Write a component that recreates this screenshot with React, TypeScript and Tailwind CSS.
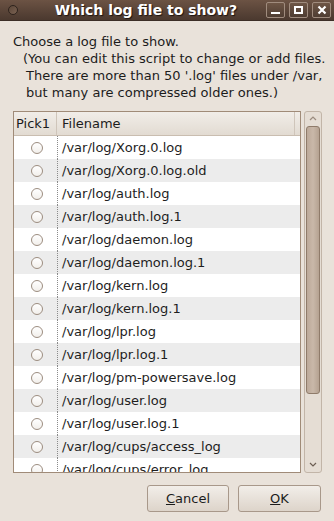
import React from "react";

const files = [
  "/var/log/Xorg.0.log",
  "/var/log/Xorg.0.log.old",
  "/var/log/auth.log",
  "/var/log/auth.log.1",
  "/var/log/daemon.log",
  "/var/log/daemon.log.1",
  "/var/log/kern.log",
  "/var/log/kern.log.1",
  "/var/log/lpr.log",
  "/var/log/lpr.log.1",
  "/var/log/pm-powersave.log",
  "/var/log/user.log",
  "/var/log/user.log.1",
  "/var/log/cups/access_log",
  "/var/log/cups/error_log",
];

const TitleButton = ({ children }: { children: React.ReactNode }) => (
  <div className="w-[19px] h-[16px] rounded-[2px] border border-[#a08c7e] bg-gradient-to-b from-[#6e5646] to-[#4f3d32] flex items-center justify-center">
    {children}
  </div>
);

export default function App() {
  return (
    <div
      className="w-[334px] h-[521px] bg-[#e9e2da] flex flex-col overflow-hidden text-[#1c1c1c]"
      style={{ fontFamily: '"DejaVu Sans", sans-serif' }}
    >
      {/* Title bar */}
      <div className="h-[21px] bg-gradient-to-b from-[#6c5344] to-[#4b392f] flex items-center px-[8px] border-b border-[#3c2e26]">
        <div className="w-[10px] h-[10px] rounded-full border border-[#2e231d] bg-gradient-to-br from-[#5b4638] to-[#7a6252]" />
        <div
          className="flex-1 text-center text-white font-bold text-[14px] leading-none pl-[8px]"
          style={{ textShadow: "1px 1px 1px #1e1410" }}
        >
          Which log file to show?
        </div>
        <div className="flex gap-[4px] -mr-[5px]">
          <TitleButton>
            <div className="w-[9px] h-[2px] bg-white mt-[6px]" />
          </TitleButton>
          <TitleButton>
            <div className="w-[9px] h-[8px] border-2 border-white" />
          </TitleButton>
          <TitleButton>
            <svg width="10" height="10" viewBox="0 0 10 10">
              <path d="M1.5 1.5 L8.5 8.5 M8.5 1.5 L1.5 8.5" stroke="white" strokeWidth="2.2" />
            </svg>
          </TitleButton>
        </div>
      </div>

      {/* Message */}
      <div className="pt-[12px] pl-[13px] text-[13px] leading-[17px]">
        <div>Choose a log file to show.</div>
        <div className="pl-[10px]">(You can edit this script to change or add files.</div>
        <div className="pl-[13px]">There are more than 50 '.log' files under /var,</div>
        <div className="pl-[13px]">but many are compressed older ones.)</div>
      </div>

      {/* List + scrollbar */}
      <div className="flex mt-[10px] ml-[13px] h-[362px]">
        <div className="w-[288px] border border-[#a08b78] bg-white flex flex-col overflow-hidden">
          <div className="h-[24px] shrink-0 flex items-center text-[13px] bg-gradient-to-b from-[#f1ede8] to-[#e2dbd2] border-b border-[#c9bdb0]">
            <div className="w-[43px] pl-[2px] h-full flex items-center border-r border-[#cfc5ba]">Pick1</div>
            <div className="pl-[5px] flex-1 h-full flex items-center border-r border-[#cfc5ba] mr-[5px]">Filename</div>
          </div>
          <div className="flex-1 overflow-hidden">
            {files.map((f, i) => (
              <div
                key={f}
                className={`h-[23px] flex items-center text-[13px] ${i % 2 === 1 ? "bg-[#ececec]" : "bg-white"}`}
              >
                <div className="w-[43px] h-full flex items-center justify-center">
                  <div className="w-[12px] h-[12px] rounded-full border border-[#9c8d80] bg-gradient-to-b from-white to-[#f2efeb] ml-[2px]" />
                </div>
                <div className="h-full border-l border-dotted border-[#8a8a8a]" />
                <div className="pl-[4px] text-[#1e1e1e]">{f}</div>
              </div>
            ))}
          </div>
        </div>
        <div className="ml-[3px] w-[18px] h-full border border-[#c2b5a8] rounded-[3px] bg-[#e5ddd4] flex flex-col items-center">
          <svg width="10" height="14" viewBox="0 0 10 14" className="shrink-0">
            <path d="M2 8 L5 5 L8 8" stroke="#9b8c7f" strokeWidth="1.2" fill="none" />
          </svg>
          <div className="w-[14px] h-[268px] rounded-[3px] border border-[#8f7b6a] bg-gradient-to-r from-[#bca999] via-[#c9b8a9] to-[#b5a291]" />
          <div className="flex-1" />
          <svg width="10" height="14" viewBox="0 0 10 14" className="shrink-0 mb-[1px]">
            <path d="M2 6 L5 9 L8 6" stroke="#6c5e53" strokeWidth="1.2" fill="none" />
          </svg>
        </div>
      </div>

      {/* Buttons */}
      <div className="flex justify-end gap-[9px] pr-[13px] mt-[12px]">
        <button className="w-[82px] h-[27px] rounded-[3px] border border-[#a8988a] bg-gradient-to-b from-[#f2eee9] to-[#ddd4ca] text-[13px]">
          <span className="underline">C</span>ancel
        </button>
        <button className="w-[83px] h-[27px] rounded-[3px] border border-[#a8988a] bg-gradient-to-b from-[#f2eee9] to-[#ddd4ca] text-[13px]">
          <span className="underline">O</span>K
        </button>
      </div>
    </div>
  );
}
